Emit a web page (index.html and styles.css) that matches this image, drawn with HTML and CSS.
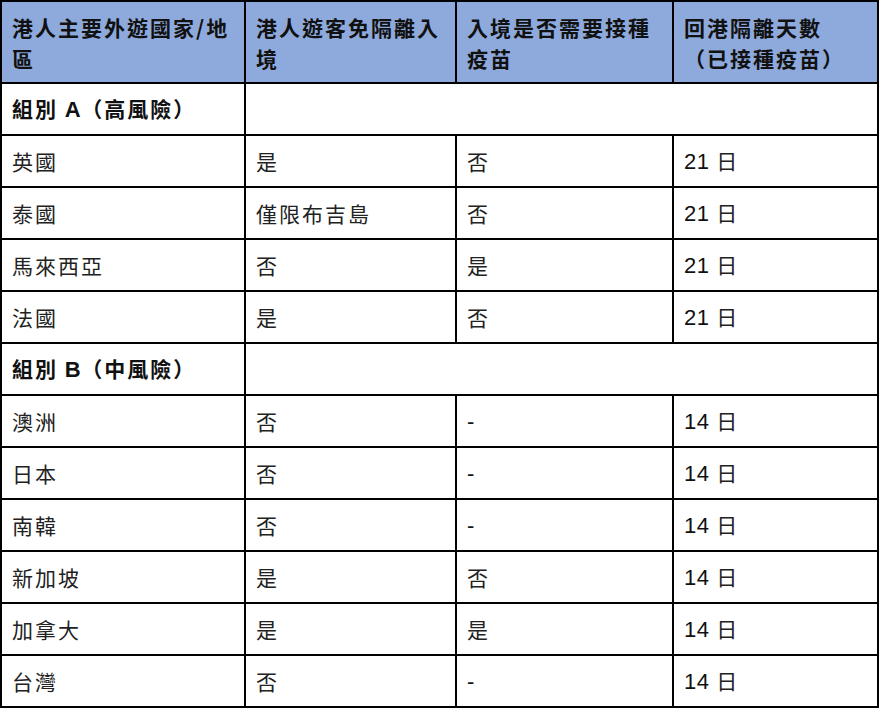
FILE: index.html
```html
<!DOCTYPE html>
<html lang="zh-Hant">
<head>
<meta charset="utf-8">
<link rel="stylesheet" href="styles.css">
</head>
<body>
<table class="tbl">
  <colgroup>
    <col class="c1"><col class="c2"><col class="c3"><col class="c4">
  </colgroup>
  <thead>
    <tr class="head">
      <th>港人主要外遊國家/地區</th>
      <th>港人遊客免隔離入境</th>
      <th>入境是否需要接種疫苗</th>
      <th>回港隔離天數<br>（已接種疫苗）</th>
    </tr>
  </thead>
  <tbody>
    <tr class="grp"><td>組別 <span class="lat">A</span>（高風險）</td><td colspan="3"></td></tr>
    <tr><td>英國</td><td>是</td><td>否</td><td><span class="num">21</span> 日</td></tr>
    <tr><td>泰國</td><td>僅限布吉島</td><td>否</td><td><span class="num">21</span> 日</td></tr>
    <tr><td>馬來西亞</td><td>否</td><td>是</td><td><span class="num">21</span> 日</td></tr>
    <tr><td>法國</td><td>是</td><td>否</td><td><span class="num">21</span> 日</td></tr>
    <tr class="grp"><td>組別 <span class="lat">B</span>（中風險）</td><td colspan="3"></td></tr>
    <tr><td>澳洲</td><td>否</td><td><span class="num">-</span></td><td><span class="num">14</span> 日</td></tr>
    <tr><td>日本</td><td>否</td><td><span class="num">-</span></td><td><span class="num">14</span> 日</td></tr>
    <tr><td>南韓</td><td>否</td><td><span class="num">-</span></td><td><span class="num">14</span> 日</td></tr>
    <tr><td>新加坡</td><td>是</td><td>否</td><td><span class="num">14</span> 日</td></tr>
    <tr><td>加拿大</td><td>是</td><td>是</td><td><span class="num">14</span> 日</td></tr>
    <tr><td>台灣</td><td>否</td><td><span class="num">-</span></td><td><span class="num">14</span> 日</td></tr>
  </tbody>
</table>
</body>
</html>
```

FILE: styles.css
```css
html, body {
  margin: 0;
  padding: 0;
  background: #ffffff;
}

.tbl {
  border-collapse: collapse;
  table-layout: fixed;
  width: 877px;
  font-family: "Noto Sans CJK TC", sans-serif;
  font-size: 21px;
  letter-spacing: 2px;
  color: #222;
}

.c1 { width: 244px; }
.c2 { width: 211px; }
.c3 { width: 217px; }
.c4 { width: 205px; }

.tbl th,
.tbl td {
  border: 2px solid #000;
  padding: 0 6px 0 10px;
  text-align: left;
  vertical-align: middle;
  line-height: 28px;
}

.tbl td {
  height: 52px;
  box-sizing: border-box;
}

.head th {
  background: #8eaadc;
  color: #111;
  font-weight: 700;
  font-size: 21px;
  letter-spacing: 2px;
  line-height: 31px;
  height: 82px;
  box-sizing: border-box;
  padding-top: 1px;
}

.grp td {
  font-weight: 700;
  color: #111;
}

.lat,
.num {
  font-family: "Liberation Sans", Arial, sans-serif;
  letter-spacing: 0.5px;
}

.lat {
  font-size: 22px;
}

.num {
  font-size: 22px;
  color: #111;
}
```
